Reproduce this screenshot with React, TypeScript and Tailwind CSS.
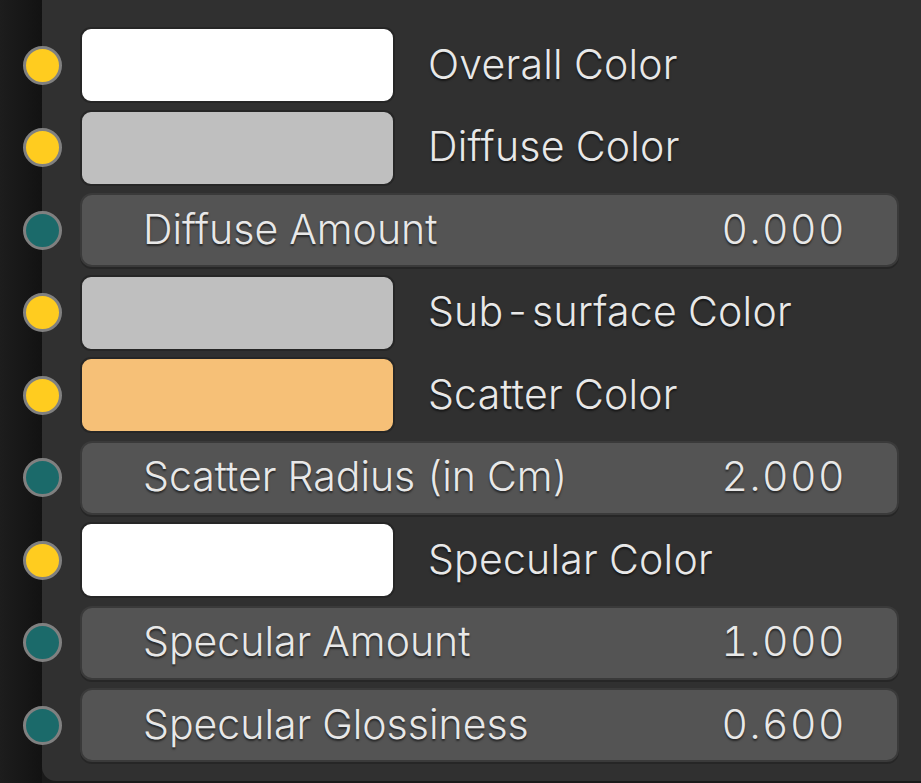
import React from 'react'

type Row =
  | { kind: 'color'; label: React.ReactNode; swatch: string }
  | { kind: 'value'; label: string; value: string }

const rows: Row[] = [
  { kind: 'color', label: 'Overall Color', swatch: '#ffffff' },
  { kind: 'color', label: 'Diffuse Color', swatch: '#bfbfbf' },
  { kind: 'value', label: 'Diffuse Amount', value: '0.000' },
  {
    kind: 'color',
    label: (
      <>
        Sub<span className="mx-[1px]">-</span>surface Color
      </>
    ),
    swatch: '#bfbfbf',
  },
  { kind: 'color', label: 'Scatter Color', swatch: '#f6c077' },
  { kind: 'value', label: 'Scatter Radius (in Cm)', value: '2.000' },
  { kind: 'color', label: 'Specular Color', swatch: '#ffffff' },
  { kind: 'value', label: 'Specular Amount', value: '1.000' },
  { kind: 'value', label: 'Specular Glossiness', value: '0.600' },
]

function Socket({ color }: { color: string }) {
  return (
    <div
      className="-ml-[19.5px] h-[39px] w-[39px] shrink-0 rounded-full border-[3px] border-[#808080]"
      style={{ backgroundColor: color }}
    />
  )
}

const textCls =
  'text-[41px] font-light leading-none text-[#e8e8e8] [text-shadow:0_2px_2px_rgba(0,0,0,0.55)]'

export default function App() {
  return (
    <div
      className="flex h-[783px] w-[921px] overflow-hidden bg-[#1a1a1a]"
      style={{ fontFamily: 'Inter, "Noto Sans", sans-serif', fontFeatureSettings: '"tnum"' }}
    >
      {/* editor background strip */}
      <div className="w-[42px] shrink-0 bg-gradient-to-r from-[#1d1d1d] to-[#121212]" />

      {/* node body */}
      <div className="flex h-[781px] flex-1 flex-col gap-[6.5px] rounded-bl-[14px] bg-[#303030] pr-[22px] pt-[27px]">
        {rows.map((row, i) =>
          row.kind === 'color' ? (
            <div key={i} className="flex h-[76px] items-center">
              <Socket color="#ffcc1f" />
              <div
                className="ml-[18.5px] h-[76px] w-[315px] shrink-0 rounded-[11px] border-2 border-[#262626]"
                style={{ backgroundColor: row.swatch }}
              />
              <span className={`ml-[33px] pb-[2px] tracking-[0.2px] ${textCls}`}>{row.label}</span>
            </div>
          ) : (
            <div key={i} className="flex h-[76px] items-center">
              <Socket color="#1b6a6a" />
              <div className="ml-[18.5px] flex h-[74px] flex-1 items-center justify-between rounded-[12px] border-2 border-[#3a3a3a] bg-[#545454] pb-[2px] pl-[61px] pr-[51px] shadow-[0_2px_0_#262626]">
                <span className={textCls}>{row.label}</span>
                <span className={`${textCls} tracking-[1.5px]`}>{row.value}</span>
              </div>
            </div>
          ),
        )}
      </div>
    </div>
  )
}
